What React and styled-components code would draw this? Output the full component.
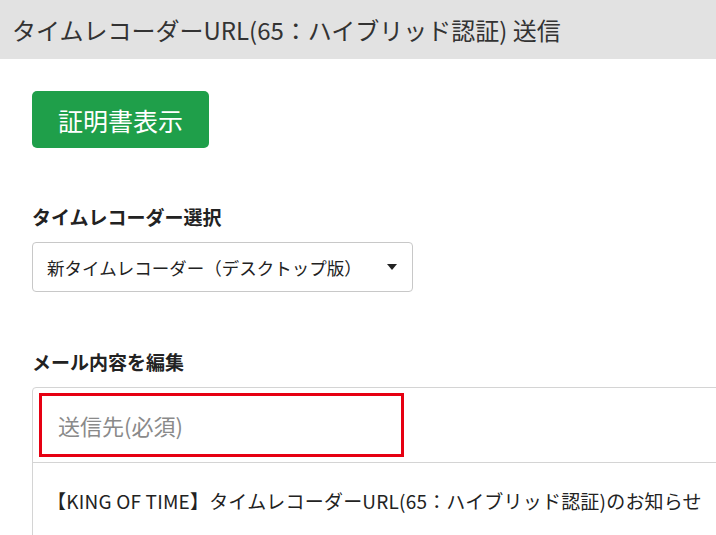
import React from "react"
import styled, { createGlobalStyle } from "styled-components"

const GlobalStyle = createGlobalStyle`
  html, body {
    margin: 0;
    padding: 0;
    overflow: hidden;
    background: #fff;
  }
  body {
    font-family: "Noto Sans CJK JP", "Noto Sans", sans-serif;
    color: #333;
  }
`

const Header = styled.div`
  height: 59px;
  background: #e2e2e2;
  display: flex;
  align-items: center;
  padding-left: 12px;
  font-size: 24px;
  color: #333;
  white-space: nowrap;
`

const Main = styled.div`
  padding: 32px 0 0 32px;
  display: flex;
  flex-direction: column;
  align-items: flex-start;
`

const GreenButton = styled.button`
  width: 177px;
  height: 57px;
  background: #1f9f4a;
  color: #fff;
  border: none;
  border-radius: 5px;
  font-family: inherit;
  font-size: 25px;
  padding: 0;
  margin-bottom: 56px;
`

const Label = styled.div`
  font-size: 19px;
  font-weight: 700;
  line-height: 26px;
  color: #222;
  margin-bottom: 12px;
`

const Select = styled.div`
  width: 381px;
  height: 50px;
  box-sizing: border-box;
  border: 1px solid #c8c8c8;
  border-radius: 4px;
  display: flex;
  align-items: center;
  justify-content: space-between;
  padding: 0 15px 0 14px;
  font-size: 17.5px;
  color: #222;
  margin-bottom: 57px;
`

const Caret = styled.span`
  width: 0;
  height: 0;
  border-left: 5px solid transparent;
  border-right: 5px solid transparent;
  border-top: 6px solid #222;
`

const Card = styled.div`
  width: 720px;
  border: 1px solid #d4d4d4;
  border-radius: 4px;
  box-sizing: border-box;
`

const Row = styled.div`
  border-bottom: 1px solid #d4d4d4;
  padding: ${p => p.$pad || "5px 6px"};
  font-size: 19px;
  letter-spacing: ${p => p.$spacing || 0}px;
  color: #222;
  white-space: nowrap;
  &:last-child {
    border-bottom: none;
  }
`

const Highlight = styled.div`
  width: 365px;
  height: 64px;
  box-sizing: border-box;
  border: 3px solid #e60012;
  display: flex;
  align-items: center;
  padding-left: 16px;
  font-size: 22px;
  color: #8a8a8a;
`

export default function App() {
  return (
    <>
      <GlobalStyle />
      <Header>タイムレコーダーURL(65：ハイブリッド認証) 送信</Header>
      <Main>
        <GreenButton>証明書表示</GreenButton>
        <Label>タイムレコーダー選択</Label>
        <Select>
          <span>新タイムレコーダー（デスクトップ版）</span>
          <Caret />
        </Select>
        <Label>メール内容を編集</Label>
        <Card>
          <Row>
            <Highlight>送信先(必須)</Highlight>
          </Row>
          <Row $pad="24px 14px 40px 14px" $spacing={0.2}>
            【KING OF TIME】タイムレコーダーURL(65：ハイブリッド認証)のお知らせ
          </Row>
        </Card>
      </Main>
    </>
  )
}
